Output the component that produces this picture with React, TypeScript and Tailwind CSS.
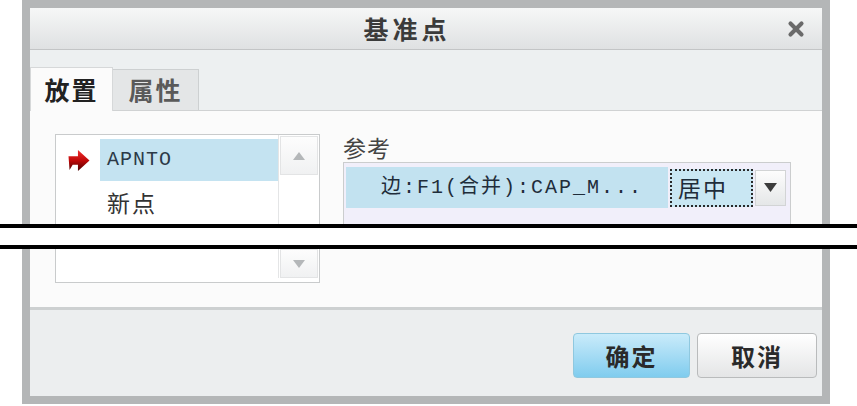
import { X } from "lucide-react"

const cjk = { fontFamily: '"Noto Sans CJK SC", "Noto Sans", sans-serif' }
const mono = { fontFamily: '"Liberation Mono", "Noto Sans CJK SC", monospace' }

function RedArrow() {
  return (
    <svg width="24" height="21" viewBox="0 0 22 20">
      <defs>
        <linearGradient id="ra" x1="0" y1="0" x2="0" y2="1">
          <stop offset="0" stopColor="#f03030" />
          <stop offset="0.5" stopColor="#c00808" />
          <stop offset="1" stopColor="#4a0000" />
        </linearGradient>
      </defs>
      <polygon points="1,6 10,6 10,0 21,10 10,20 10,14 5,14 2,19" fill="url(#ra)" />
    </svg>
  )
}

export default function App() {
  return (
    <div className="w-[857px] h-[406px] bg-white overflow-hidden flex flex-col" style={cjk}>
      {/* upper part of dialog */}
      <div className="ml-[22px] w-[808px] h-[224px] border-x-8 border-t-8 border-[#b4b6b7] flex flex-col overflow-hidden">
        <div className="h-[42px] shrink-0 flex items-center bg-gradient-to-b from-[#f6f7f7] to-[#dfe1e2] border-b border-[#c3c5c6]">
          <div className="flex-1 text-center text-[25px] font-bold text-[#3b3b3b] tracking-[4px]">基准点</div>
          <div className="w-[24px] mr-[14px] flex items-center justify-center text-[#6a6a6a]">
            <X size={22} strokeWidth={4.5} />
          </div>
        </div>

        <div className="h-[61px] shrink-0 bg-[#edf0f1] flex items-end border-b border-[#d0d2d3]">
          <div className="w-[83px] h-[44px] mb-[-1px] bg-[#fbfbfb] border-t border-x border-[#d6d8d9] flex items-center justify-center text-[25px] font-bold text-[#222] tracking-[2px]">
            放置
          </div>
          <div className="w-[86px] h-[41px] bg-[#e4e6e7] border-t border-r border-[#cdd0d1] flex items-center justify-center text-[25px] font-bold text-[#5a5a5a] tracking-[2px]">
            属性
          </div>
        </div>

        <div className="flex-1 bg-[#fbfbfb] flex pl-[25px] pt-[23px]">
          {/* list box */}
          <div className="w-[265px] h-[148px] shrink-0 border border-[#c9cbcc] bg-white flex">
            <div className="flex-1 pt-[4px]">
              <div className="h-[42px] flex">
                <div className="w-[44px] flex items-center justify-center pl-[2px]">
                  <RedArrow />
                </div>
                <div className="flex-1 bg-[#c4e3f1] flex items-center pl-[7px] text-[20px] text-[#2c3a48] tracking-[1px]" style={mono}>
                  APNTO
                </div>
              </div>
              <div className="h-[42px] flex items-center pl-[51px] text-[23px] text-[#333] tracking-[2px]">新点</div>
            </div>
            <div className="w-[41px] border-l border-[#e4e5e6] pt-[1px]">
              <div className="mx-[1px] h-[39px] border border-[#e3e4e5] bg-gradient-to-b from-[#fdfdfd] to-[#f0f1f2] flex items-center justify-center">
                <svg width="12" height="8" viewBox="0 0 12 8">
                  <polygon points="0,8 12,8 6,0" fill="#b4b7b9" />
                </svg>
              </div>
            </div>
          </div>

          {/* reference */}
          <div className="ml-[23px] flex flex-col">
            <div className="h-[28px] text-[23px] leading-[26px] text-[#444] tracking-[1px]">参考</div>
            <div className="w-[448px] h-[80px] border border-[#cbcdce] bg-[#f1effa] pt-[4px] pl-[2px]">
              <div className="h-[41px] flex items-center">
                <div className="w-[322px] h-full bg-[#c2e2f0] flex items-center pl-[35px] text-[20px] text-[#1f2d3a] whitespace-nowrap tracking-[2px]" style={mono}>
                  边:F1(合并):CAP_M...
                </div>
                <div className="ml-[2px] w-[83px] h-[38px] border-2 border-dotted border-[#2a2a2a] bg-[#c9e7f3] flex items-center pl-[6px] text-[23px] text-[#1f2d3a] tracking-[2px]">
                  居中
                </div>
                <div className="ml-[2px] w-[31px] h-[36px] border border-[#d2d4d5] bg-gradient-to-b from-[#fdfdfd] to-[#e5e7e8] flex items-center justify-center">
                  <svg width="13" height="9" viewBox="0 0 13 9">
                    <polygon points="0,0 13,0 6.5,9" fill="#3c3c3c" />
                  </svg>
                </div>
              </div>
            </div>
          </div>
        </div>
      </div>

      {/* break lines */}
      <div className="h-[4px] bg-black shrink-0" />
      <div className="h-[17px] bg-white shrink-0" />
      <div className="h-[4px] bg-black shrink-0" />

      {/* lower part of dialog */}
      <div className="ml-[22px] w-[808px] h-[155px] border-x-8 border-b-8 border-[#b4b6b7] flex flex-col">
        <div className="h-[58px] shrink-0 bg-[#fbfbfb] pl-[25px]">
          <div className="w-[265px] h-[34px] border-x border-b border-[#c9cbcc] bg-white flex">
            <div className="flex-1" />
            <div className="w-[41px] border-l border-[#e4e5e6] h-[29px]">
              <div className="mx-[1px] h-[29px] border border-[#e3e4e5] bg-gradient-to-b from-[#fdfdfd] to-[#f0f1f2] flex items-center justify-center">
                <svg width="12" height="8" viewBox="0 0 12 8">
                  <polygon points="0,0 12,0 6,8" fill="#b4b7b9" />
                </svg>
              </div>
            </div>
          </div>
        </div>
        <div className="flex-1 bg-[#eceeef] border-t-[3px] border-[#cdd0d1] flex justify-end items-start pt-[23px] pr-[5px] gap-[7px]">
          <button className="w-[117px] h-[45px] rounded-[4px] border border-[#8fc8df] bg-gradient-to-b from-[#c9ebfa] to-[#7fccee] text-[24px] font-bold text-[#2a2a2a] tracking-[2px]">
            确定
          </button>
          <button className="w-[120px] h-[45px] rounded-[4px] border border-[#b9bbbc] bg-gradient-to-b from-[#ffffff] to-[#e4e5e6] text-[24px] font-bold text-[#2a2a2a] tracking-[2px]">
            取消
          </button>
        </div>
      </div>
    </div>
  )
}
